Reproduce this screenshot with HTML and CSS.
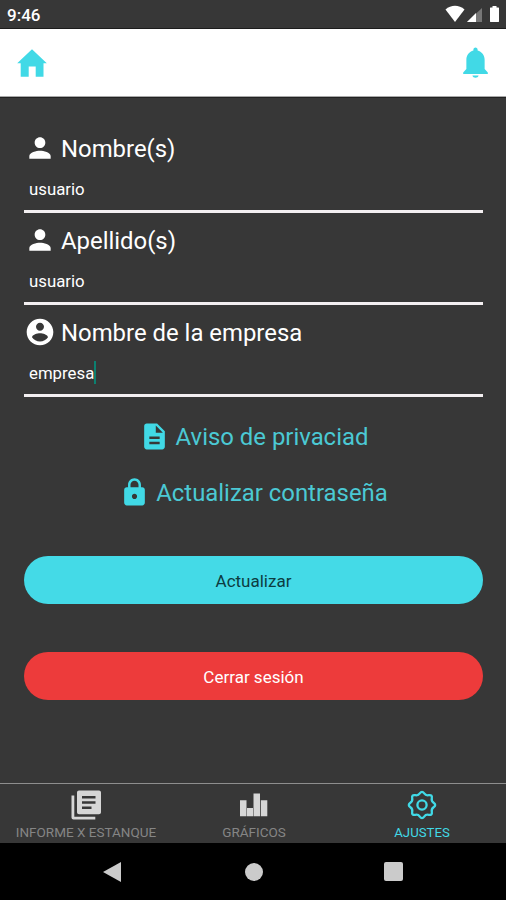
FILE: index.html
```html
<!DOCTYPE html>
<html lang="es">
<head>
    <meta charset="UTF-8">
    <meta name="viewport" content="width=device-width, initial-scale=1.0">
    <title>Ajustes</title>
    <link rel="stylesheet" href="styles.css">
</head>
<body>
    <div class="status-bar">
        <span class="clock">9:46</span>
        <svg class="status-icons" width="58" height="22" viewBox="0 0 58 22">
            <path fill="#fff" d="M0.500 4.500C6-0.500 14-0.500 19.500 4.500L10 17z"/>
            <path fill="#777" d="M37 3v14H22z"/>
            <path fill="#fff" d="M31 8V17h-9z"/>
            <path fill="#fff" d="M47.500 1h4v1.500h2c.300 0 .500.200.500.500v13.500c0 .300-.200.500-.500.500h-8c-.300 0-.500-.200-.500-.500V3c0-.300.200-.500.500-.500h2z"/>
        </svg>
    </div>

    <header class="header">
        <svg width="30" height="28" viewBox="0 0 30 28" fill="#41d9e6">
            <path d="M15 0.300L29.800 14.200H26.500V27.700H18.700V17.500H11.700V27.700H3.700V14.200H0.200z"/>
        </svg>
        <svg width="25" height="32" viewBox="0 0 26 32" preserveAspectRatio="none" fill="#41d9e6">
            <path d="M13 0.500c1.300 0 2.200 1 2.200 2.200v0.800c4.200 1 7.300 4.600 7.300 9.200v9.300l3.300 3.500v1.500H0.200v-1.500l3.300-3.500v-9.300c0-4.600 3.100-8.200 7.300-9.200v-0.800c0-1.200 0.900-2.200 2.200-2.200z"/>
            <path d="M9.800 28.500h6.400c-0.500 3-5.900 3-6.400 0z"/>
        </svg>
    </header>

    <main class="content">
        <div class="field">
            <div class="label">
                <svg width="32" height="32" viewBox="0 0 24 24" fill="#fff"><path d="M12 12c2.210 0 4-1.790 4-4s-1.790-4-4-4-4 1.790-4 4 1.790 4 4 4zm0 2c-2.670 0-8 1.340-8 4v2h16v-2c0-2.660-5.330-4-8-4z"/></svg>
                <span>Nombre(s)</span>
            </div>
            <div class="input">usuario</div>
        </div>
        <div class="field">
            <div class="label">
                <svg width="32" height="32" viewBox="0 0 24 24" fill="#fff"><path d="M12 12c2.210 0 4-1.790 4-4s-1.790-4-4-4-4 1.790-4 4 1.790 4 4 4zm0 2c-2.670 0-8 1.340-8 4v2h16v-2c0-2.660-5.330-4-8-4z"/></svg>
                <span>Apellido(s)</span>
            </div>
            <div class="input">usuario</div>
        </div>
        <div class="field">
            <div class="label">
                <svg width="32" height="32" viewBox="0 0 24 24" fill="#fff"><path fill-rule="evenodd" d="M12 2C6.480 2 2 6.480 2 12s4.480 10 10 10 10-4.480 10-10S17.520 2 12 2zm0 3c1.660 0 3 1.340 3 3s-1.340 3-3 3-3-1.340-3-3 1.340-3 3-3zm0 14.200c-2.500 0-4.710-1.280-6-3.220.030-1.990 4-3.080 6-3.080 1.990 0 5.970 1.090 6 3.080-1.290 1.940-3.500 3.220-6 3.220z"/></svg>
                <span>Nombre de la empresa</span>
            </div>
            <div class="input">empresa<span class="cursor"></span></div>
        </div>

        <a class="link" href="#">
            <svg width="31" height="31" viewBox="0 0 24 24" fill="#41d9e6"><path d="M14 2H6c-1.100 0-1.990.900-1.990 2L4 20c0 1.100.890 2 1.990 2H18c1.100 0 2-.900 2-2V8l-6-6zm2 16H8v-2h8v2zm0-4H8v-2h8v2zm-3-5V3.500L18.500 9H13z"/></svg>
            <span>Aviso de privaciad</span>
        </a>
        <a class="link" href="#">
            <svg width="31" height="31" viewBox="0 0 24 24" fill="#41d9e6"><path d="M18 8h-1V6c0-2.760-2.240-5-5-5S7 3.240 7 6v2H6c-1.100 0-2 .900-2 2v10c0 1.100.900 2 2 2h12c1.100 0 2-.900 2-2V10c0-1.100-.900-2-2-2zm-6 9c-1.100 0-2-.900-2-2s.900-2 2-2 2 .900 2 2-.900 2-2 2zm3.100-9H8.900V6c0-1.710 1.390-3.100 3.100-3.100s3.100 1.390 3.100 3.100v2z"/></svg>
            <span>Actualizar contraseña</span>
        </a>

        <button class="btn btn-update">Actualizar</button>
        <button class="btn btn-logout">Cerrar sesión</button>
    </main>

    <nav class="tabs">
        <a class="tab" href="#">
            <svg width="30" height="30" viewBox="0 0 30 30" fill="#d6d6d6">
                <path d="M0.500 5.500h2.800v21.200h21v2.800H2.500c-1.100 0-2-.900-2-2z"/>
                <path fill-rule="evenodd" d="M8 .500h20c1.100 0 2 .900 2 2v19.700c0 1.100-.900 2-2 2H8c-1.100 0-2-.900-2-2V2.500c0-1.100.900-2 2-2zM11 6v2.500h13.500V6zm0 5.200v2.500h13.500v-2.500zm0 5.200v2.500h9.500v-2.500z"/>
            </svg>
            <span>INFORME X ESTANQUE</span>
        </a>
        <a class="tab" href="#">
            <svg width="30" height="30" viewBox="0 0 30 30" fill="#d6d6d6">
                <path d="M1 10.200h6.500v16H1zM8 18h6v8.200H8zM14.500 3.500h6.500v22.700h-6.500zM21.800 10.200h6.500v16h-6.500z"/>
            </svg>
            <span>GRÁFICOS</span>
        </a>
        <a class="tab active" href="#">
            <svg width="30" height="30" viewBox="-15 -15 30 30" fill="none" stroke="#41d9e6" stroke-width="2.300">
                <path d="M-2.200 -11.600Q0 -14.800 2.200 -11.600Q3.800 -9.200 6.700 -9.800Q10.500 -10.500 9.800 -6.700Q9.200 -3.800 11.600 -2.200Q14.800 0 11.600 2.200Q9.200 3.800 9.800 6.700Q10.500 10.500 6.700 9.800Q3.800 9.200 2.200 11.600Q0 14.800 -2.200 11.600Q-3.800 9.200 -6.700 9.800Q-10.500 10.500 -9.800 6.700Q-9.200 3.800 -11.600 2.200Q-14.800 0 -11.600 -2.200Q-9.200 -3.800 -9.800 -6.700Q-10.500 -10.500 -6.700 -9.800Q-3.800 -9.200 -2.200 -11.600z"/>
                <circle r="4.600"/>
            </svg>
            <span>AJUSTES</span>
        </a>
    </nav>

    <div class="android-nav">
        <svg width="18" height="20" viewBox="0 0 18 20" fill="#cbcbcb"><path d="M18 0v20L0 10z"/></svg>
        <div class="nav-home"></div>
        <div class="nav-recent"></div>
    </div>
</body>
</html>
```
FILE: styles.css
```css
* {
    margin: 0;
    padding: 0;
    box-sizing: border-box;
    font-family: Roboto, sans-serif;
}

body {
    display: flex;
    flex-direction: column;
    width: 506px;
    height: 900px;
    overflow: hidden;
    background-color: #373737;
    color: #fff;
}

svg {
    display: block;
    flex-shrink: 0;
}

.status-bar {
    display: flex;
    justify-content: space-between;
    height: 29px;
    padding: 5px 3px 0 7px;
    border-bottom: 1px solid #1c1c1c;
}

.clock {
    font-size: 17px;
    line-height: 21px;
    font-weight: 500;
}

.header {
    display: flex;
    justify-content: space-between;
    align-items: center;
    height: 68px;
    padding: 0 18px 0 17px;
    background-color: #fff;
    border-bottom: 1px solid #a9a9a9;
}

.content {
    flex: 1;
    padding: 32px 23px 0 24px;
    border-top: 1px solid #222;
}

.field {
    height: 92px;
    border-bottom: 3px solid #f3eff1;
    padding-top: 11px;
}

.field:first-child {
    height: 83px;
    padding-top: 2px;
}

.label {
    display: flex;
    align-items: center;
    gap: 5px;
    height: 32px;
    font-size: 23.900px;
}

.label span {
    padding-top: 2px;
}

.input {
    display: flex;
    align-items: center;
    height: 49px;
    padding-left: 5px;
    font-size: 16.800px;
}

.cursor {
    width: 2px;
    height: 23px;
    background-color: #0c8070;
}

.link {
    display: flex;
    justify-content: center;
    align-items: center;
    gap: 6px;
    height: 32px;
    margin-bottom: 24px;
    font-size: 23.900px;
    color: #4bc9d4;
    text-decoration: none;
}

.link svg {
    margin-bottom: 2px;
}

.field + .link {
    margin-top: 24px;
}

.btn {
    display: block;
    width: 100%;
    height: 48px;
    border: none;
    border-radius: 24px;
    font-size: 17px;
    padding-top: 1px;
    margin-top: 48px;
}

.btn-update {
    margin-top: 47px;
    background-color: #44dae7;
    color: #0d3c41;
}

.btn-logout {
    background-color: #ed3b3b;
    color: #fff;
}

.tabs {
    display: flex;
    height: 60px;
    border-top: 1px solid #8e8e8e;
    padding: 6px 0 0 2px;
}

.tab {
    flex: 1;
    display: flex;
    flex-direction: column;
    align-items: center;
    gap: 5px;
    font-size: 13.500px;
    line-height: 15px;
    color: #858585;
    text-decoration: none;
    white-space: nowrap;
}

.tab.active {
    font-size: 13.200px;
    color: #41d9e6;
}

.android-nav {
    display: flex;
    justify-content: space-between;
    align-items: center;
    height: 57px;
    padding: 0 103px;
    background-color: #000;
}

.nav-home {
    width: 18px;
    height: 18px;
    margin-left: 2px;
    border-radius: 50%;
    background-color: #cbcbcb;
}

.nav-recent {
    width: 19px;
    height: 19px;
    border-radius: 2px;
    background-color: #cbcbcb;
}
```
